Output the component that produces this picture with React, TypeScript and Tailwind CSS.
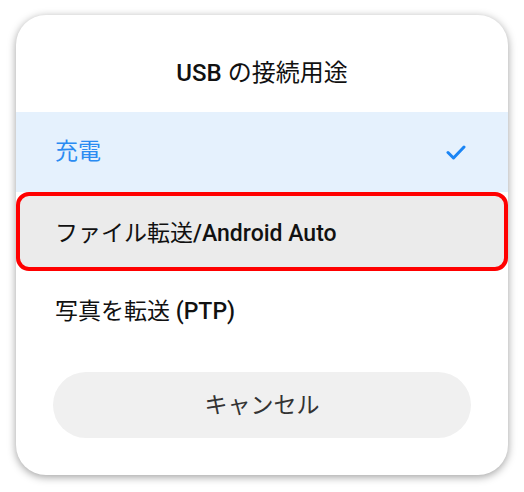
import React from "react";

export default function App() {
  const font = { fontFamily: 'Roboto, "Noto Sans CJK JP", sans-serif' };
  return (
    <div className="w-[524px] h-[492px] bg-white pt-[15px] pl-[16px]" style={font}>
      <div className="w-[492px] h-[460px] bg-white rounded-[30px] shadow-[0_2px_9px_rgba(0,0,0,0.38)] overflow-hidden flex flex-col">
        <div className="h-[97px] flex items-center justify-center pt-[19px] text-[24px] text-[#111]">
          <span className="font-medium">USB</span>&nbsp;の接続用途
        </div>
        <div className="h-[80px] bg-[#e5f1fd] flex items-center justify-between pl-[39px] pr-[42px]">
          <span className="text-[23px] text-[#2a8bf2]">充電</span>
          <svg width="20" height="15" viewBox="0 0 20 15" fill="none">
            <path d="M2 7.5 L7.5 13 L18 2" stroke="#1a85f5" strokeWidth="3" strokeLinecap="round" strokeLinejoin="round" />
          </svg>
        </div>
        <div className="h-[79px] bg-[#ebebeb] border-[4px] border-[#ff0000] rounded-[13px] flex items-center pl-[35px] pt-[5px]">
          <span className="text-[23px] text-[#111]">
            ファイル転送<span className="font-medium">/Android Auto</span>
          </span>
        </div>
        <div className="h-[82px] flex items-center pl-[39px]">
          <span className="text-[23px] text-[#111]">
            写真を転送 <span className="font-medium">(PTP)</span>
          </span>
        </div>
        <div className="px-[37px] pt-[19px]">
          <div className="h-[66px] rounded-full bg-[#f0f0f0] flex items-center justify-center pt-[3px] text-[23px] text-[#333]">
            キャンセル
          </div>
        </div>
      </div>
    </div>
  );
}
